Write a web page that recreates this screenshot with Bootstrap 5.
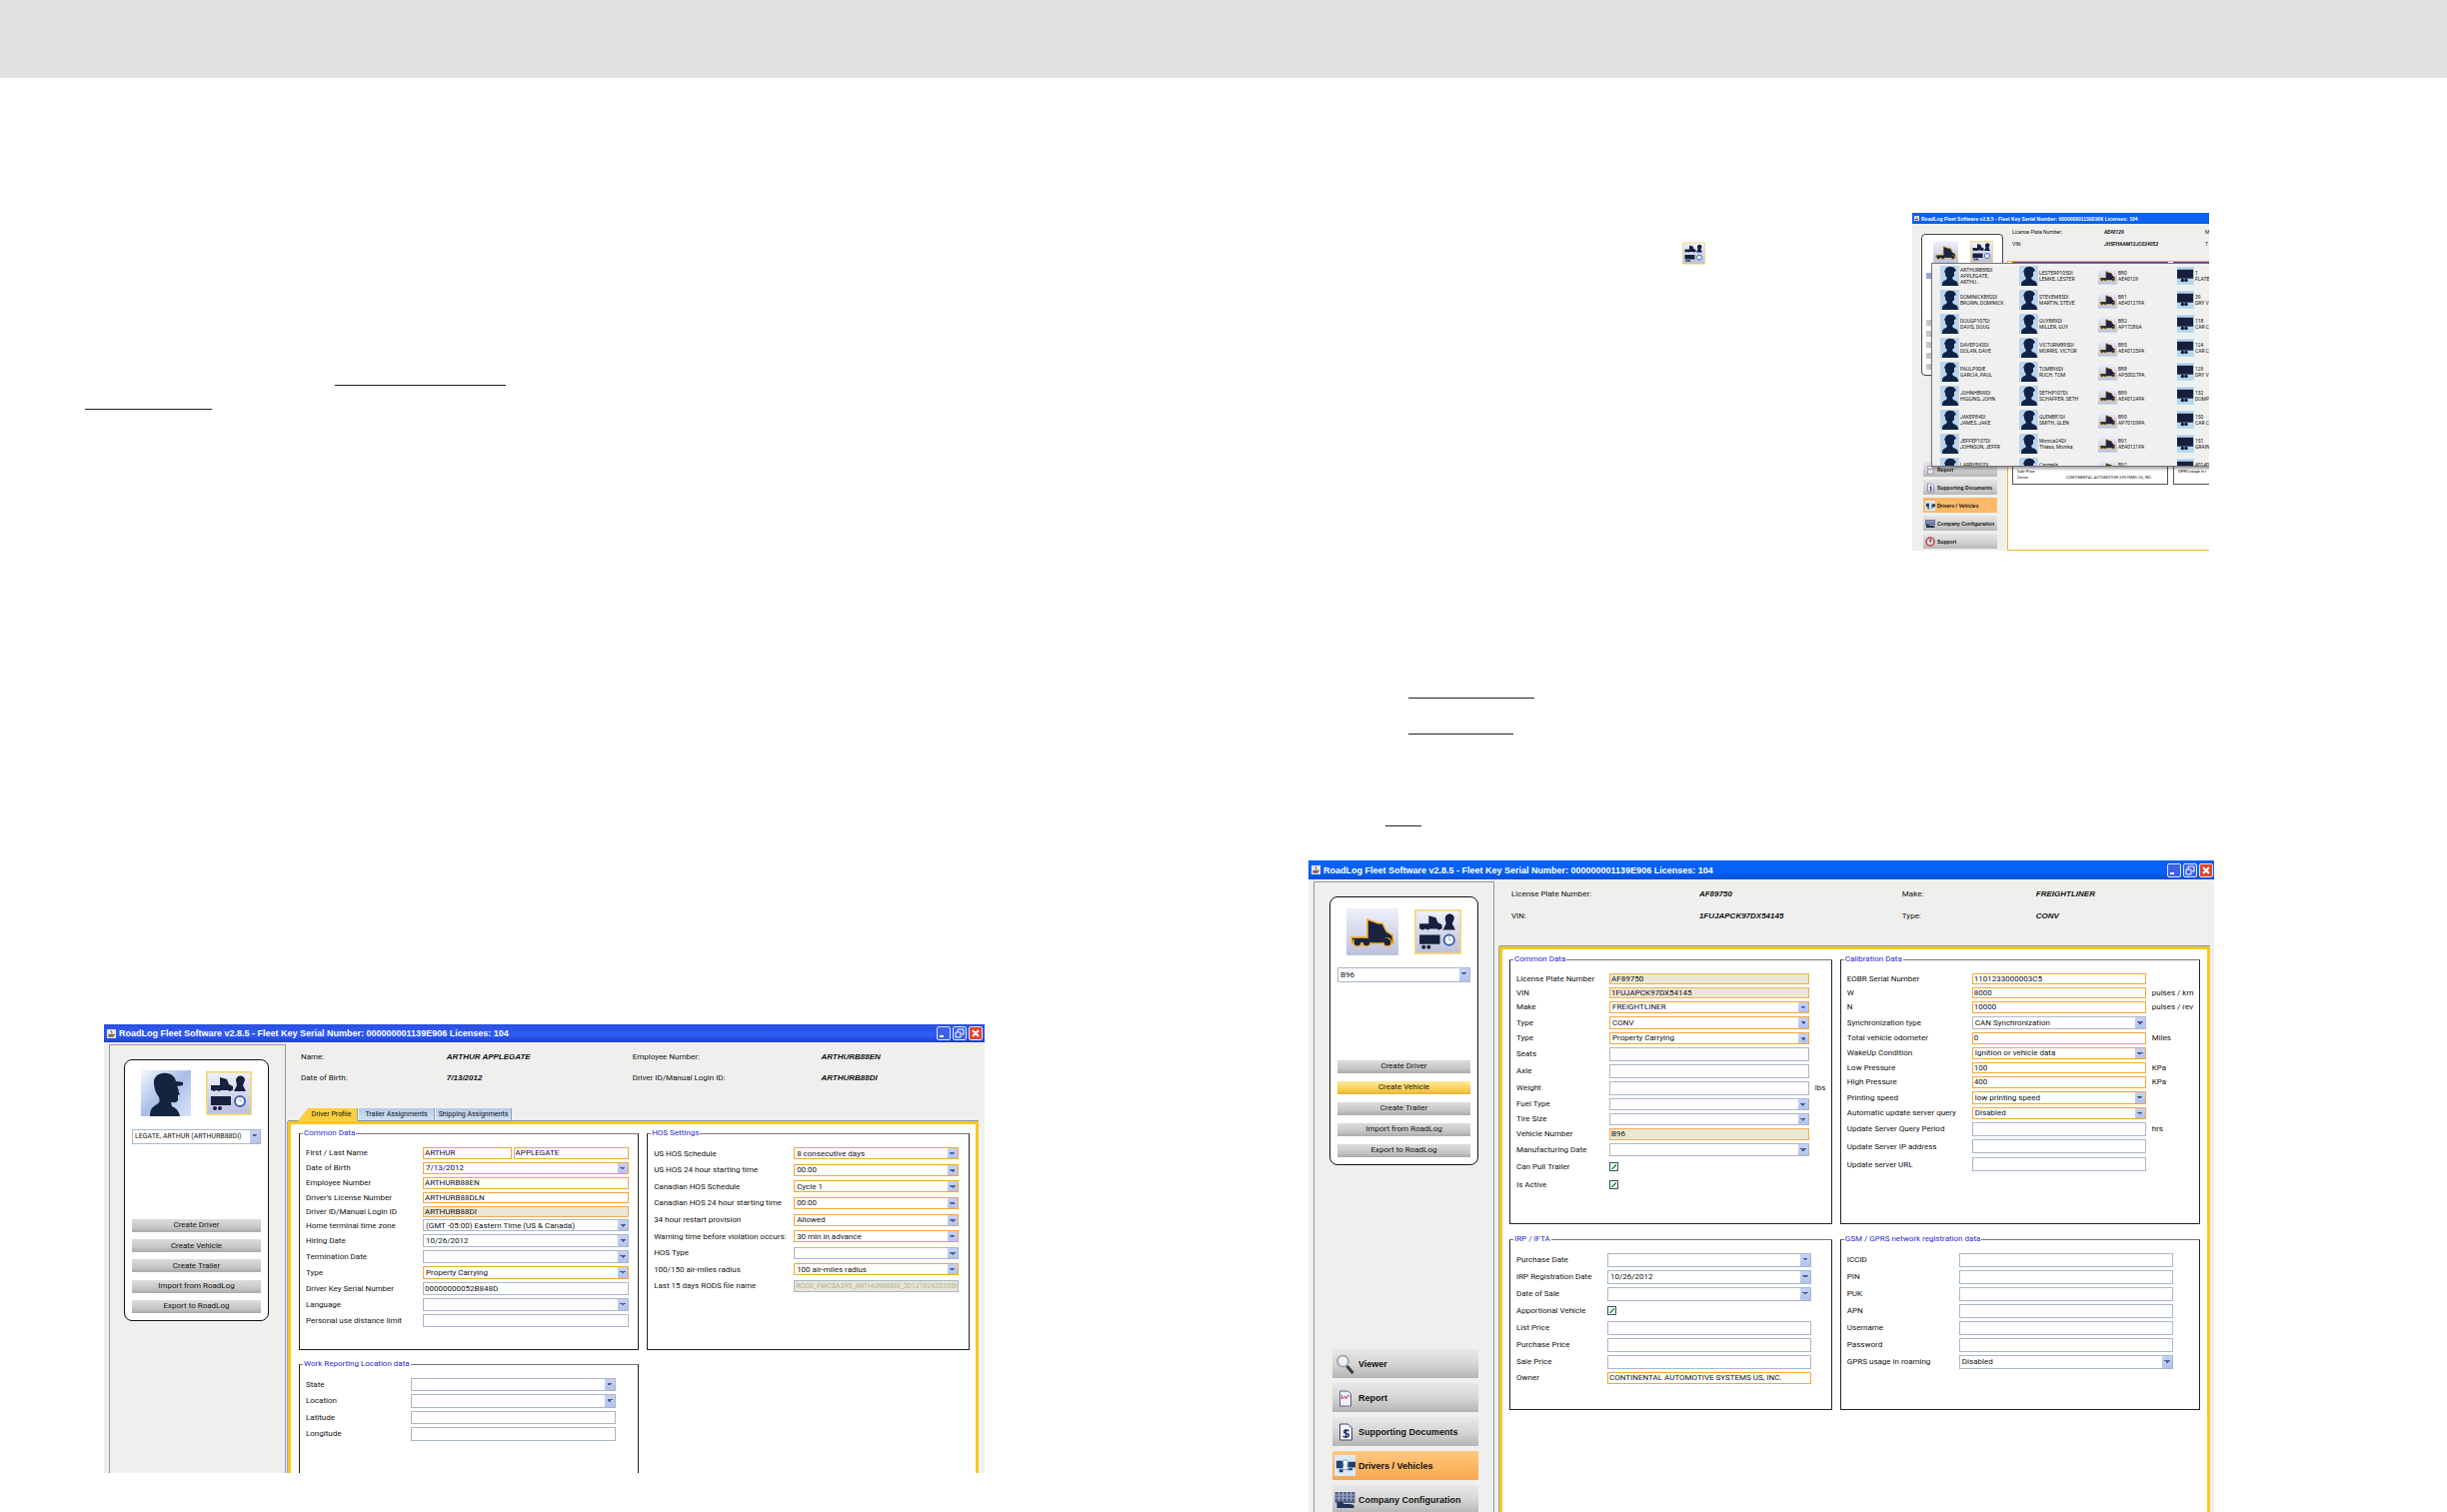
<!DOCTYPE html>
<html lang="en">
<head>
<meta charset="utf-8">
<meta name="viewport" content="width=device-width, initial-scale=1">
<title>RoadLog Fleet Software manual</title>
<link href="https://cdn.jsdelivr.net/npm/bootstrap@5.3.0/dist/css/bootstrap.min.css" rel="stylesheet">
<style>
body{background:#fff;color:#111;font-family:"Liberation Sans",Arial,sans-serif;font-size:8px;line-height:10px}
.topband{height:78px;background:#e2e2e2;flex:none}
.rule{display:block;height:1px;background:#222;flex:none}
.u1{width:171px;margin:307px 0 0 335px}
.u2{width:127px;margin:23px 0 0 85px}
.u3{width:126px;margin:147px 0 0 185px}
.u4{width:105px;margin:35px 0 0 185px}
.u5{width:36px;margin:91px 0 0 162px}
svg{display:block}
/* application windows */
.win{background:#efefee;overflow:hidden}
.win-driver{width:72%;height:449px;margin:615px 0 0 104px;flex:none}
.win-vehicle{width:74%;margin:34px 0 0 85px;flex:1 1 0;min-height:0}
.tbar{height:18px;flex:none;color:#fff;font-weight:700;font-size:9px;padding:0 2px 0 3px;gap:3px;background:linear-gradient(#2a4fe0,#2f5cf4 60%,#1f3fc8)}
.win-vehicle .tbar{height:19px;background:linear-gradient(#0a62f4,#0660f8 60%,#0450d8);padding-right:1px}
.wbtn{width:14px;height:14px;padding:0;border:1px solid #dfe6ff;border-radius:2px;background:#3c63e4;color:#fff}
.wbtn.shut{background:#e0452a}
.gapw{gap:2px}
.side{margin:2px 0 0 5px;width:177px;flex:none;border:1px solid #8e99ac;border-width:1px 1px 0;padding:14px 16px 0 14px}
.win-vehicle .side{width:181px;padding:14px 15px 0}
.picker{background:#fff;border:1px solid #111;border-radius:8px;height:262px;padding:10px 7px 7px}
.win-vehicle .picker{height:269px;padding-top:11px}
.icons{height:46px;padding:0 9px;margin-bottom:13px}
.iconbtn{border:0;padding:0;background:none}
.btns{margin-top:75px;height:96px}
.win-vehicle .btns{margin-top:78px;height:98px}
.sbtn{height:13px;border:0;padding:0;background:linear-gradient(#dcdcdc,#c8c8c8 60%,#aaa);font-family:Roboto,sans-serif;font-size:8px;line-height:12px;color:#111}
.sbtn.hot{background:linear-gradient(#fde9a0,#fbd050 60%,#e8b43c)}
.navs{margin-top:184px;gap:5px;padding:0 0 0 3px}
.nbtn{height:29px;border:0;padding:0 0 0 2px;gap:3px;text-align:left;font-weight:700;font-size:9px;color:#111;background:linear-gradient(#e8e8e8,#d6d6d6 50%,#b4b4b4)}
.nbtn.hot{background:linear-gradient(#ffc880,#fdb560 60%,#f4a850)}
.info{display:grid;grid-template-columns:146fr 186fr 189fr 164fr;grid-auto-rows:21px;align-items:center;padding:4px 0 0 15px;height:66px;font-size:8px;align-content:start;flex:none;margin:0}
.win-vehicle .info{grid-template-columns:188fr 203fr 134fr 178fr;padding:4px 0 0 17px;height:67px;grid-auto-rows:22px}
.info dt{font-weight:400;font-family:Roboto,sans-serif}
.info dd{margin:0;font-weight:700;font-style:italic}
.tabs{height:13px;margin-left:12px;gap:1px;flex:none}
.tabs button{border:0;padding:0;height:13px;line-height:13px;font-size:7px;font-family:Roboto,sans-serif;background:linear-gradient(#b4cce8,#d2e2f4);border-right:1px solid #8fa4c0;width:76px;color:#111}
.tabs .on{background:#fbcf3c;width:60px;padding-left:8px;clip-path:polygon(10px 0,100% 0,100% 100%,0 100%)}
.sheet{background:#fff;border:3px solid #fac81c;border-bottom:0;margin:0 6px 0 2px;flex:1 1 0;min-height:0;display:grid;grid-template-columns:340fr 323fr;grid-template-rows:221px 160px;gap:10px 8px;padding:5px 6px 0 8px;overflow:hidden;box-shadow:0 -1px 0 #7f95b0,-1px 0 0 #9aa8bc}
.win-vehicle .sheet{margin:0 4px 0 5px;grid-template-columns:322fr 359fr;grid-template-rows:269px 175px;gap:11px 8px;padding:6px 7px 0}
.grp{border:1px solid #222;border-top-color:#777;padding:8px 0 0 6px;min-width:0}
.grp legend{float:none;width:auto;margin:0 0 0 -3px;padding:0 1px;font-size:8px;line-height:8px;color:#2a2acc;font-family:Roboto,sans-serif}
.fr{display:grid;grid-template-columns:var(--lw) 1fr var(--sw);align-items:center;font-family:Roboto,sans-serif;font-size:8px;line-height:9px;white-space:nowrap}
.g1{--lw:117px;--sw:9px}.g2{--lw:140px;--sw:10px}.g3{--lw:105px;--sw:22px}
.v1{--lw:93px;--sw:22px}.v2{--lw:125px;--sw:53px}.v3{--lw:91px;--sw:20px}.v4{--lw:112px;--sw:26px}
.h14{height:14px}.h15{height:15px}.h16{height:16px}.h17{height:17px}.h18{height:18px}
.even{height:149px}.even .fr{flex:1}
.fr input:not([type=checkbox]),.fr select,.picker select{appearance:none;border:1px solid #a9b7c8;border-radius:0;background-color:#fff;padding:0 2px;margin:0;height:12px;width:100%;min-width:0;font-family:Roboto,sans-serif;font-size:8px;line-height:9px;color:#111}
.fr input:not([type=checkbox]){padding:0 1px}
.fr.h14 input:not([type=checkbox]){height:11px}
.fr.h16 input:not([type=checkbox]),.fr.h16 select{height:13px}
.fr.h17 input:not([type=checkbox]),.fr.h17 select,.fr.h18 input:not([type=checkbox]){height:14px}
.fr select,.picker select{background-size:3px 3px,3px 3px,10px 100%;background-position:right 5px top 4px,right 2px top 4px,right 0 top 0;background-repeat:no-repeat;background-image:linear-gradient(-135deg,#4c5e96 50%,transparent 50%),linear-gradient(135deg,#4c5e96 50%,transparent 50%),linear-gradient(#c6d2f6,#b4c2ee)}
.picker select{height:15px}
.win-driver .picker select{font-size:7px}
.fr .req{border-color:#f5a63a!important}
.fr .off{background-color:#ece6d4!important;border-color:#f0b050!important;color:#333}
.fr .dis{background-color:#e8e6d6!important;color:#b4b09c!important;font-size:7px!important}
.fr span{padding-left:6px}
.tick{appearance:none;width:9px;height:9px;margin:0;border:1px solid #35506a;background:linear-gradient(135deg,transparent 45%,#2a9a3a 45%,#2a9a3a 62%,transparent 62%) center/5px 5px no-repeat #fff}
/* small window with the open picker */
.toprow{padding:135px 0 0 459px;flex:none}
.toggleimg{margin:29px 207px 0 0}
.mini{width:297px;height:338px;font-family:Roboto,sans-serif;font-size:4px;line-height:6px;flex:none}
.mini .tbar{height:11px;background:#0a62ee;gap:2px;padding:0 2px;font-family:"Liberation Sans",Arial,sans-serif;font-size:5px}
.mside{width:90px;padding:10px 4px 0 8px;flex:none;margin-left:1px}
.mbox{height:142px;background:#fff;border:1px solid #444;border-radius:4px;padding:6px 9px 0 4px;width:82px}
.mtop{padding-left:7px}
.stub{display:block;width:8px;height:6px;background:#c8c8c8;margin-bottom:5px}
.stub.pick{background:#9aa8e4;margin:9px 0 41px}
.mnav{margin:86px 0 0 2px;gap:3px;width:74px}
.mbtn{height:15px;border:0;padding:0 0 0 2px;gap:2px;font-family:"Liberation Sans",Arial,sans-serif;font-size:5px;font-weight:700;line-height:6px;background:linear-gradient(#e6e6e6,#d4d4d4 50%,#b8b8b8);color:#111;white-space:nowrap}
.mbtn.hot{background:#fdb968}
.minfo{height:37px;display:grid;grid-template-columns:92px 101px 1fr;grid-auto-rows:12px;align-content:start;padding:2px 0 0 5px;align-items:center;font-size:5px;overflow:hidden}
.minfo b{font-style:italic}
.msheet{background:#fff;border:1px solid #f2b42c;border-width:1px 0 1px 1px;padding:0 0 0 4px;flex:1;gap:5px}
.mgrp{border:1px solid #555;height:223px;padding:206px 3px 0 4px}
.pop{position:absolute;left:19px;top:50px;width:330px;height:204px;background:#f0f0ef;border:1px solid #777;box-shadow:1px 2px 3px #0006;overflow:hidden;padding-left:8px;display:grid;grid-template-columns:repeat(4,79px);grid-auto-rows:24px;align-items:center;font-size:5px}
.pop div{display:flex;align-items:center;gap:1px;white-space:nowrap}
</style>
<script src="https://cdn.jsdelivr.net/npm/bootstrap@5.3.0/dist/js/bootstrap.bundle.min.js"></script>
</head>
<body class="vh-100 overflow-hidden d-flex flex-column">
<svg width="0" height="0" class="position-absolute" aria-hidden="true">
<defs>
<linearGradient id="blu" x1="0" y1="0" x2="1" y2="1"><stop offset="0" stop-color="#f4f8ff"/><stop offset=".5" stop-color="#a9bee8"/><stop offset="1" stop-color="#dbe5fa"/></linearGradient>
<linearGradient id="lav" x1="0" y1="0" x2="0" y2="1"><stop offset="0" stop-color="#f0f1fb"/><stop offset="1" stop-color="#bcc0dc"/></linearGradient>
</defs>
<symbol id="driver" viewBox="0 0 50 46"><rect width="50" height="46" fill="url(#blu)"/><path fill="#14243e" d="M13 13C12 6 19 2 26 3c6 1 8 4 9 8l7 1v3l-6 1c2 3 1 5 3 8l-2 1v5c-1 3-5 2-7 2l1 4c4 2 7 4 8 10H9c0-7 2-9 7-12 3-2 3-4 2-7-3-4-5-9-5-14z"/></symbol>
<symbol id="facing" viewBox="0 0 19 20"><rect width="19" height="20" fill="#bcd4ee"/><path fill="#0f2444" d="M5 4c1-4 8-4 10-1l1 2-2 1v4l-2 2 1 2c3 1 5 2 5 6H2c0-4 1-5 4-6l1-2c-2-1-2-4-2-5L4 6z"/></symbol>
<symbol id="truck" viewBox="0 0 52 47"><rect width="52" height="47" fill="url(#lav)"/><g fill="#1b2340" stroke="#f5ae20" stroke-width="1.500"><path d="M5 29h16V11l11 4h4l4 8 6 4 1 8H6z"/><circle cx="11" cy="34" r="4"/><circle cx="20" cy="34" r="4"/><circle cx="41" cy="34" r="4"/></g><path fill="#1b2340" d="M8 30h34v4H8z"/></symbol>
<symbol id="pick" viewBox="0 0 46 44"><rect x=".8" y=".8" width="44.4" height="42.4" fill="url(#lav)" stroke="#f2d874" stroke-width="1.6"/><g fill="#17203f"><path d="M5 14h9V6l7 2 2 5 4 2v4H5z"/><circle cx="8" cy="18" r="2"/><circle cx="13" cy="18" r="2"/><circle cx="24" cy="18" r="2"/><path d="M30 9c0-6 9-6 9 0l-2 5 3 6H28l3-6zM5 25h20v9H5z"/><circle cx="9" cy="37" r="2"/><circle cx="14" cy="37" r="2"/></g><circle cx="34" cy="30" r="5" fill="#fff" stroke="#3f64a8" stroke-width="2"/><path d="M34 27v3h2" stroke="#8fa8d4" fill="none"/></symbol>
<symbol id="trailer" viewBox="0 0 19 20"><rect width="19" height="20" fill="#b6d8ee"/><path fill="#15203c" d="M0 3h18v10H0z"/><circle cx="6" cy="15" r="2" fill="#15203c"/><circle cx="10" cy="15" r="2" fill="#15203c"/></symbol>
<symbol id="java" viewBox="0 0 10 10"><rect width="10" height="10" fill="#e8e6dc"/><path d="M2 6h5v2H2zM7 6h2M5 1c-2 2 2 2 0 4" stroke="#7a5a3a" fill="#56719c"/></symbol>
<symbol id="lens" viewBox="0 0 20 20"><circle cx="8" cy="7" r="5.500" fill="#eef3f6" stroke="#a4abb0" stroke-width="2"/><path d="M12 12l6 7" stroke="#333b44" stroke-width="3"/></symbol>
<symbol id="rep" viewBox="0 0 20 20"><path d="M5 3h8l3 3v12H5z" fill="#f0f0fa" stroke="#55608c"/><path d="M7 11l3-3 1 3 2-4 2 2M7 7v4" stroke="#d03848" fill="none"/></symbol>
<symbol id="doc" viewBox="0 0 20 20"><path d="M5 2h8l4 4v12H5z" fill="#f4f6fb" stroke="#38456c"/><path d="M14 9c-2-2-5-1-5 1s5 1 5 3-4 3-6 1M11 7v9" stroke="#24346a" stroke-width="1.500" fill="none"/></symbol>
<symbol id="dv" viewBox="0 0 22 22"><path fill="#dbe9f6" d="M0 0h22v22H0z"/><path fill="#22406e" d="M2 6h7v8H2zM14 7h8v6h-8zM5 15h4v3H5zM13 14h6v2h-6z"/><path fill="#fff" stroke="#7a9ac0" d="M9 8c0-4 5-4 5 0l-1 3 2 4H8l2-4z"/></symbol>
<symbol id="comp" viewBox="0 0 20 20"><path fill="#56618c" d="M0 2h20v11H0z"/><path stroke="#a8b0cc" d="M0 5h20M0 8h20M4 2v9M8 2v9M12 2v9M16 2v9"/><path fill="#262f55" d="M2 12h5l2 2h6l4 1v3H2z"/></symbol>
<symbol id="sup" viewBox="0 0 20 20"><circle cx="10" cy="10" r="8" fill="#d8dde0" stroke="#c8373a" stroke-width="3"/><path d="M8 8c0-3 5-2 4 0l-2 2v2" stroke="#334" fill="none" stroke-width="2"/></symbol>
<symbol id="min" viewBox="0 0 12 12"><path d="M2 9h4" stroke="#fff" stroke-width="2"/></symbol>
<symbol id="res" viewBox="0 0 12 12"><path d="M4 5V2h6v5H8M2 5h5v5H2z" stroke="#fff" fill="none"/></symbol>
<symbol id="cls" viewBox="0 0 12 12"><path d="M3 3l6 6M9 3l-6 6" stroke="#fff" stroke-width="2"/></symbol>
</svg>
<header class="topband"></header>
<main class="row g-0 flex-grow-1" style="min-height:0">
<section class="col-6 d-flex flex-column">
<i class="rule u1"></i><i class="rule u2"></i>
<article class="win win-driver d-flex flex-column">
<div class="tbar d-flex align-items-center"><svg width="9" height="9"><use href="#java"/></svg><span class="me-auto">RoadLog Fleet Software v2.8.5 - Fleet Key Serial Number: 000000001139E906 Licenses: 104</span><div class="d-flex gapw"><button class="wbtn" aria-label="Minimize"><svg width="12" height="12"><use href="#min"/></svg></button><button class="wbtn" aria-label="Restore"><svg width="12" height="12"><use href="#res"/></svg></button><button class="wbtn shut" aria-label="Close"><svg width="12" height="12"><use href="#cls"/></svg></button></div></div>
<div class="d-flex flex-grow-1" style="min-height:0">
<aside class="side">
<div class="picker d-flex flex-column">
<div class="icons d-flex justify-content-between"><button class="iconbtn" aria-label="Driver"><svg width="50" height="46"><use href="#driver"/></svg></button><button class="iconbtn" aria-label="Choose"><svg width="46" height="44"><use href="#pick"/></svg></button></div>
<select aria-label="Driver"><option>LEGATE, ARTHUR (ARTHURB88DI)</option></select>
<div class="btns d-flex flex-column justify-content-between"><button class="sbtn">Create Driver</button><button class="sbtn">Create Vehicle</button><button class="sbtn">Create Trailer</button><button class="sbtn">Import from RoadLog</button><button class="sbtn">Export to RoadLog</button></div>
</div>
</aside>
<div class="d-flex flex-column flex-grow-1">
<dl class="info"><dt>Name:</dt><dd>ARTHUR APPLEGATE</dd><dt>Employee Number:</dt><dd>ARTHURB88EN</dd><dt>Date of Birth:</dt><dd>7/13/2012</dd><dt>Driver ID/Manual Login ID:</dt><dd>ARTHURB88DI</dd></dl>
<div class="tabs d-flex"><button class="on">Driver Profile</button><button>Trailer Assignments</button><button>Shipping Assignments</button></div>
<div class="sheet">
<fieldset class="grp g1"><legend>Common Data</legend>
<div class="fr h15"><label for="a1">First / Last Name</label><div class="d-flex gapw"><input id="a1" class="req" style="flex:88 1 0" value="ARTHUR"><input aria-label="Last Name" class="req" style="flex:116 1 0" value="APPLEGATE"></div></div>
<div class="fr h15"><label for="a2">Date of Birth</label><select id="a2" class="req"><option>7/13/2012</option></select></div>
<div class="fr h15"><label for="a3">Employee Number</label><input id="a3" class="req" value="ARTHURB88EN"></div>
<div class="fr h14"><label for="a4">Driver's License Number</label><input id="a4" class="req" value="ARTHURB88DLN"></div>
<div class="fr h14"><label for="a5">Driver ID/Manual Login ID</label><input id="a5" class="off" value="ARTHURB88DI"></div>
<div class="fr h14"><label for="a6">Home terminal time zone</label><select id="a6"><option>(GMT -05:00) Eastern Time (US &amp; Canada)</option></select></div>
<div class="fr h16"><label for="a7">Hiring Date</label><select id="a7"><option>10/26/2012</option></select></div>
<div class="fr h16"><label for="a8">Termination Date</label><select id="a8"><option></option></select></div>
<div class="fr h16"><label for="a9">Type</label><select id="a9" class="req"><option>Property Carrying</option></select></div>
<div class="fr h16"><label for="a10">Driver Key Serial Number</label><input id="a10" value="00000000052B848D"></div>
<div class="fr h16"><label for="a11">Language</label><select id="a11"><option></option></select></div>
<div class="fr h16"><label for="a12">Personal use distance limit</label><input id="a12"></div>
</fieldset>
<fieldset class="grp g2"><legend>HOS Settings</legend>
<div class="even d-flex flex-column">
<div class="fr"><label for="b1">US HOS Schedule</label><select id="b1" class="req"><option>8 consecutive days</option></select></div>
<div class="fr"><label for="b2">US HOS 24 hour starting time</label><select id="b2" class="req"><option>00:00</option></select></div>
<div class="fr"><label for="b3">Canadian HOS Schedule</label><select id="b3" class="req"><option>Cycle 1</option></select></div>
<div class="fr"><label for="b4">Canadian HOS 24 hour starting time</label><select id="b4" class="req"><option>00:00</option></select></div>
<div class="fr"><label for="b5">34 hour restart provision</label><select id="b5" class="req"><option>Allowed</option></select></div>
<div class="fr"><label for="b6">Warning time before violation occurs:</label><select id="b6" class="req"><option>30 min in advance</option></select></div>
<div class="fr"><label for="b7">HOS Type</label><select id="b7"><option></option></select></div>
<div class="fr"><label for="b8">100/150 air-miles radius</label><select id="b8" class="req"><option>100 air-miles radius</option></select></div>
<div class="fr"><label for="b9">Last 15 days RODS file name</label><input id="b9" class="dis" value="RODS_FMCSA395_ARTHURB88DI_20121026203558"></div>
</div></fieldset>
<fieldset class="grp g3"><legend>Work Reporting Location data</legend>
<div class="fr h16"><label for="c1">State</label><select id="c1"><option></option></select></div>
<div class="fr h17"><label for="c2">Location</label><select id="c2"><option></option></select></div>
<div class="fr h16"><label for="c3">Latitude</label><input id="c3"></div>
<div class="fr h17"><label for="c4">Longitude</label><input id="c4"></div>
</fieldset>
</div></div></div>
</article>
</section>
<section class="col-6 d-flex flex-column" style="height:calc(100vh - 78px)">
<div class="toprow d-flex align-items-start">
<svg class="toggleimg" width="23" height="23"><use href="#pick"/></svg>
<article class="win mini position-relative d-flex flex-column">
<div class="tbar d-flex align-items-center"><svg width="5" height="5"><use href="#java"/></svg><span class="text-nowrap">RoadLog Fleet Software v2.8.5 - Fleet Key Serial Number: 000000001139E906 Licenses: 104</span></div>
<div class="d-flex flex-grow-1">
<div class="mside"><div class="mbox"><div class="mtop d-flex justify-content-between"><svg width="25" height="23"><use href="#truck"/></svg><svg width="23" height="22"><use href="#pick"/></svg></div><i class="stub pick"></i><i class="stub"></i><i class="stub"></i><i class="stub"></i><i class="stub"></i><i class="stub"></i></div>
<div class="mnav d-flex flex-column"><button class="mbtn d-flex align-items-center"><svg width="10" height="10"><use href="#rep"/></svg>Report</button><button class="mbtn d-flex align-items-center"><svg width="10" height="10"><use href="#doc"/></svg>Supporting Documents</button><button class="mbtn hot d-flex align-items-center"><svg width="10" height="10"><use href="#dv"/></svg>Drivers / Vehicles</button><button class="mbtn d-flex align-items-center"><svg width="10" height="10"><use href="#comp"/></svg>Company Configuration</button><button class="mbtn d-flex align-items-center"><svg width="10" height="10"><use href="#sup"/></svg>Support</button></div></div>
<div class="flex-grow-1 d-flex flex-column ms-1">
<div class="minfo"><span>License Plate Number:</span><b>AE40129</b><span>M</span><span>VIN:</span><b>JHSFHAAM12JC024052</b><span>T</span></div>
<div class="msheet d-flex"><div class="mgrp d-flex" style="width:156px"><div style="width:49px">Sale Price<br>Owner</div><div><br>CONTINENTAL AUTOMOTIVE SYSTEMS US, INC.</div></div><div class="mgrp flex-grow-1 text-nowrap border-end-0">GPRS usage in r</div></div>
</div></div>
<div class="pop">
<div><svg width="19" height="20"><use href="#facing"/></svg><span>ARTHURB88DI<br>APPLEGATE,<br>ARTHU..</span></div><div><svg width="19" height="20"><use href="#facing"/></svg><span>LESTERP105DI<br>LEMKE, LESTER</span></div><div><svg width="19" height="20"><use href="#truck"/></svg><span>B80<br>AE40129</span></div><div><svg width="17" height="18"><use href="#trailer"/></svg><span>1<br>FLATB</span></div>
<div><svg width="19" height="20"><use href="#facing"/></svg><span>DOMINICKB82DI<br>BROWN, DOMINICK</span></div><div><svg width="19" height="20"><use href="#facing"/></svg><span>STEVEM83DI<br>MARTIN, STEVE</span></div><div><svg width="19" height="20"><use href="#truck"/></svg><span>B81<br>AE40127PA</span></div><div><svg width="17" height="18"><use href="#trailer"/></svg><span>39<br>DRY V</span></div>
<div><svg width="19" height="20"><use href="#facing"/></svg><span>DOUGP107DI<br>DAVIS, DOUG</span></div><div><svg width="19" height="20"><use href="#facing"/></svg><span>GUYB89DI<br>MILLER, GUY</span></div><div><svg width="19" height="20"><use href="#truck"/></svg><span>B82<br>AP17286A</span></div><div><svg width="17" height="18"><use href="#trailer"/></svg><span>118<br>CAR C</span></div>
<div><svg width="19" height="20"><use href="#facing"/></svg><span>DAVEP243DI<br>DOLAN, DAVE</span></div><div><svg width="19" height="20"><use href="#facing"/></svg><span>VICTORM895DI<br>MORRIS, VICTOR</span></div><div><svg width="19" height="20"><use href="#truck"/></svg><span>B85<br>AE40125PA</span></div><div><svg width="17" height="18"><use href="#trailer"/></svg><span>124<br>CAR C</span></div>
<div><svg width="19" height="20"><use href="#facing"/></svg><span>PAULP9DIE<br>GARCIA, PAUL</span></div><div><svg width="19" height="20"><use href="#facing"/></svg><span>TOMB96DI<br>RUCH, TOM</span></div><div><svg width="19" height="20"><use href="#truck"/></svg><span>B88<br>AP50027PA</span></div><div><svg width="17" height="18"><use href="#trailer"/></svg><span>129<br>DRY V</span></div>
<div><svg width="19" height="20"><use href="#facing"/></svg><span>JOHNHB99DI<br>HIGGINS, JOHN</span></div><div><svg width="19" height="20"><use href="#facing"/></svg><span>SETHP107DI<br>SCHAFFER, SETH</span></div><div><svg width="19" height="20"><use href="#truck"/></svg><span>B89<br>AE40124PA</span></div><div><svg width="17" height="18"><use href="#trailer"/></svg><span>132<br>DUMP</span></div>
<div><svg width="19" height="20"><use href="#facing"/></svg><span>JAKEP84DI<br>JAMES, JAKE</span></div><div><svg width="19" height="20"><use href="#facing"/></svg><span>GLENB81DI<br>SMITH, GLEN</span></div><div><svg width="19" height="20"><use href="#truck"/></svg><span>B90<br>AP70109PA</span></div><div><svg width="17" height="18"><use href="#trailer"/></svg><span>150<br>CAR C</span></div>
<div><svg width="19" height="20"><use href="#facing"/></svg><span>JEFFEP107DI<br>JOHNSON, JEFFR</span></div><div><svg width="19" height="20"><use href="#facing"/></svg><span>Monica24DI<br>Thiess, Monika</span></div><div><svg width="19" height="20"><use href="#truck"/></svg><span>B91<br>AE40121PA</span></div><div><svg width="17" height="18"><use href="#trailer"/></svg><span>151<br>GRAIN</span></div>
<div><svg width="19" height="20"><use href="#facing"/></svg><span>LARRYB92DI<br>&nbsp;</span></div><div><svg width="19" height="20"><use href="#facing"/></svg><span>Carmela<br>&nbsp;</span></div><div><svg width="19" height="20"><use href="#truck"/></svg><span>B92<br>&nbsp;</span></div><div><svg width="17" height="18"><use href="#trailer"/></svg><span>40140<br>&nbsp;</span></div>
</div>
</article>
</div>
<i class="rule u3"></i><i class="rule u4"></i><i class="rule u5"></i>
<article class="win win-vehicle d-flex flex-column">
<div class="tbar d-flex align-items-center"><svg width="9" height="9"><use href="#java"/></svg><span class="me-auto">RoadLog Fleet Software v2.8.5 - Fleet Key Serial Number: 000000001139E906 Licenses: 104</span><div class="d-flex gapw"><button class="wbtn" aria-label="Minimize"><svg width="12" height="12"><use href="#min"/></svg></button><button class="wbtn" aria-label="Restore"><svg width="12" height="12"><use href="#res"/></svg></button><button class="wbtn shut" aria-label="Close"><svg width="12" height="12"><use href="#cls"/></svg></button></div></div>
<div class="d-flex flex-grow-1" style="min-height:0">
<aside class="side">
<div class="picker d-flex flex-column">
<div class="icons d-flex justify-content-between"><button class="iconbtn" aria-label="Vehicle"><svg width="52" height="47"><use href="#truck"/></svg></button><button class="iconbtn" aria-label="Choose"><svg width="47" height="45"><use href="#pick"/></svg></button></div>
<select aria-label="Vehicle"><option>B96</option></select>
<div class="btns d-flex flex-column justify-content-between"><button class="sbtn">Create Driver</button><button class="sbtn hot">Create Vehicle</button><button class="sbtn">Create Trailer</button><button class="sbtn">Import from RoadLog</button><button class="sbtn">Export to RoadLog</button></div>
</div>
<nav class="navs d-flex flex-column"><button class="nbtn d-flex align-items-center"><svg width="21" height="20"><use href="#lens"/></svg>Viewer</button><button class="nbtn d-flex align-items-center"><svg width="21" height="20"><use href="#rep"/></svg>Report</button><button class="nbtn d-flex align-items-center"><svg width="21" height="20"><use href="#doc"/></svg>Supporting Documents</button><button class="nbtn hot d-flex align-items-center"><svg width="21" height="21"><use href="#dv"/></svg>Drivers / Vehicles</button><button class="nbtn d-flex align-items-center"><svg width="21" height="20"><use href="#comp"/></svg>Company Configuration</button></nav>
</aside>
<div class="d-flex flex-column flex-grow-1">
<dl class="info"><dt>License Plate Number:</dt><dd>AF89750</dd><dt>Make:</dt><dd>FREIGHTLINER</dd><dt>VIN:</dt><dd>1FUJAPCK97DX54145</dd><dt>Type:</dt><dd>CONV</dd></dl>
<div class="sheet">
<fieldset class="grp v1"><legend>Common Data</legend>
<div class="fr h14"><label for="d1">License Plate Number</label><input id="d1" class="off" value="AF89750"></div>
<div class="fr h14"><label for="d2">VIN</label><input id="d2" class="off" value="1FUJAPCK97DX54145"></div>
<div class="fr h15"><label for="d3">Make</label><select id="d3" class="req"><option>FREIGHTLINER</option></select></div>
<div class="fr h16"><label for="d4">Type</label><select id="d4" class="req"><option>CONV</option></select></div>
<div class="fr h15"><label for="d5">Type</label><select id="d5" class="req"><option>Property Carrying</option></select></div>
<div class="fr h17"><label for="d6">Seats</label><input id="d6"></div>
<div class="fr h17"><label for="d7">Axle</label><input id="d7"></div>
<div class="fr h17"><label for="d8">Weight</label><input id="d8"><span>lbs</span></div>
<div class="fr h15"><label for="d9">Fuel Type</label><select id="d9"><option></option></select></div>
<div class="fr h15"><label for="d10">Tire Size</label><select id="d10"><option></option></select></div>
<div class="fr h15"><label for="d11">Vehicle Number</label><input id="d11" class="off" value="B96"></div>
<div class="fr h16"><label for="d12">Manufacturing Date</label><select id="d12"><option></option></select></div>
<div class="fr h18"><label for="d13">Can Pull Trailer</label><input id="d13" type="checkbox" class="tick" checked></div>
<div class="fr h18"><label for="d14">Is Active</label><input id="d14" type="checkbox" class="tick" checked></div>
</fieldset>
<fieldset class="grp v2"><legend>Calibration Data</legend>
<div class="fr h14"><label for="e1">EOBR Serial Number</label><input id="e1" class="req" value="1101233000003C5"></div>
<div class="fr h14"><label for="e2">W</label><input id="e2" class="req" value="8000"><span>pulses / km</span></div>
<div class="fr h15"><label for="e3">N</label><input id="e3" class="req" value="10000"><span>pulses / rev</span></div>
<div class="fr h16"><label for="e4">Synchronization type</label><select id="e4"><option>CAN Synchronization</option></select></div>
<div class="fr h15"><label for="e5">Total vehicle odometer</label><input id="e5" class="req" value="0"><span>Miles</span></div>
<div class="fr h15"><label for="e6">WakeUp Condition</label><select id="e6" class="req"><option>Ignition or vehicle data</option></select></div>
<div class="fr h14"><label for="e7">Low Pressure</label><input id="e7" class="req" value="100"><span>KPa</span></div>
<div class="fr h15"><label for="e8">High Pressure</label><input id="e8" class="req" value="400"><span>KPa</span></div>
<div class="fr h16"><label for="e9">Printing speed</label><select id="e9" class="req"><option>low printing speed</option></select></div>
<div class="fr h15"><label for="e10">Automatic update server query</label><select id="e10" class="req"><option>Disabled</option></select></div>
<div class="fr h17"><label for="e11">Update Server Query Period</label><input id="e11"><span>hrs</span></div>
<div class="fr h18"><label for="e12">Update Server IP address</label><input id="e12"></div>
<div class="fr h18"><label for="e13">Update server URL</label><input id="e13"></div>
</fieldset>
<fieldset class="grp v3"><legend>IRP / IFTA</legend>
<div class="fr h17"><label for="f1">Purchase Date</label><select id="f1"><option></option></select></div>
<div class="fr h17"><label for="f2">IRP Registration Date</label><select id="f2"><option>10/26/2012</option></select></div>
<div class="fr h17"><label for="f3">Date of Sale</label><select id="f3"><option></option></select></div>
<div class="fr h17"><label for="f4">Apportional Vehicle</label><input id="f4" type="checkbox" class="tick" checked></div>
<div class="fr h17"><label for="f5">List Price</label><input id="f5"></div>
<div class="fr h17"><label for="f6">Purchase Price</label><input id="f6"></div>
<div class="fr h17"><label for="f7">Sale Price</label><input id="f7"></div>
<div class="fr h15"><label for="f8">Owner</label><input id="f8" class="req" value="CONTINENTAL AUTOMOTIVE SYSTEMS US, INC."></div>
</fieldset>
<fieldset class="grp v4"><legend>GSM / GPRS network registration data</legend>
<div class="fr h17"><label for="g1">ICCID</label><input id="g1"></div>
<div class="fr h17"><label for="g2">PIN</label><input id="g2"></div>
<div class="fr h17"><label for="g3">PUK</label><input id="g3"></div>
<div class="fr h17"><label for="g4">APN</label><input id="g4"></div>
<div class="fr h17"><label for="g5">Username</label><input id="g5"></div>
<div class="fr h17"><label for="g6">Password</label><input id="g6"></div>
<div class="fr h17"><label for="g7">GPRS usage in roaming</label><select id="g7"><option>Disabled</option></select></div>
</fieldset>
</div></div></div>
</article>
</section>
</main>
</body>
</html>
